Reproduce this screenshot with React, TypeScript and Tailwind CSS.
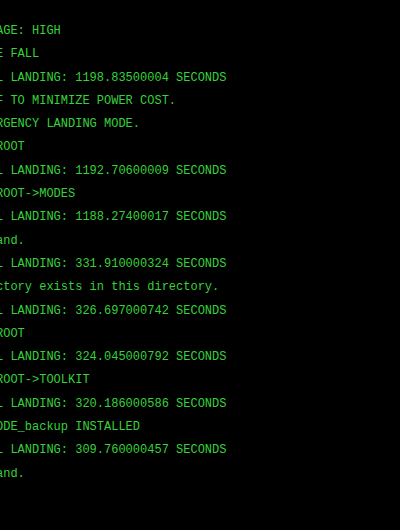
const lines = [
  "AGE: HIGH",
  "E FALL",
  "L LANDING: 1198.83500004 SECONDS",
  "F TO MINIMIZE POWER COST.",
  "RGENCY LANDING MODE.",
  "ROOT",
  "L LANDING: 1192.70600009 SECONDS",
  "ROOT->MODES",
  "L LANDING: 1188.27400017 SECONDS",
  "and.",
  "L LANDING: 331.910000324 SECONDS",
  "ctory exists in this directory.",
  "L LANDING: 326.697000742 SECONDS",
  "ROOT",
  "L LANDING: 324.045000792 SECONDS",
  "ROOT->TOOLKIT",
  "L LANDING: 320.186000586 SECONDS",
  "ODE_backup INSTALLED",
  "L LANDING: 309.760000457 SECONDS",
  "and.",
];

export default function App() {
  return (
    <div className="w-[400px] h-[530px] bg-black overflow-hidden">
      <div className="pt-[20px] -ml-[4px] font-['Liberation_Mono',monospace] text-[12px] leading-[23.3px] text-[#36d23a] whitespace-pre">
        {lines.map((line, i) => (
          <div key={i}>{line}</div>
        ))}
      </div>
    </div>
  );
}
